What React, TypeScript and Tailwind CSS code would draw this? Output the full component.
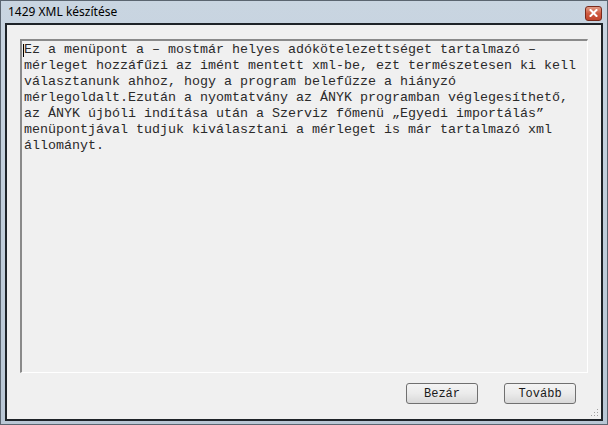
export default function App() {
  const lines = [
    "Ez a menüpont a – mostmár helyes adókötelezettséget tartalmazó –",
    "mérleget hozzáfűzi az imént mentett xml-be, ezt természetesen ki kell",
    "választanunk ahhoz, hogy a program belefűzze a hiányzó",
    "mérlegoldalt.Ezután a nyomtatvány az ÁNYK programban véglegesíthető,",
    "az ÁNYK újbóli indítása után a Szerviz főmenü „Egyedi importálás”",
    "menüpontjával tudjuk kiválasztani a mérleget is már tartalmazó xml",
    "állományt.",
  ];

  return (
    <div className="w-[608px] h-[425px] flex flex-col border border-[#5b6570] bg-gradient-to-b from-[#c9d5e1] to-[#b9c7d5] pb-[3px] px-[4px] overflow-hidden">
      {/* title bar */}
      <div className="h-[22px] flex items-center justify-between pl-[3px] pr-[1px]">
        <span className="text-[12px] text-black font-['Noto_Sans',sans-serif] leading-none">
          1429 XML készítése
        </span>
        <button className="w-[17px] h-[15px] mt-[2px] rounded-[3px] border border-[#7a2a1c] bg-gradient-to-b from-[#e19b86] via-[#cf5a40] to-[#c0432b] flex items-center justify-center">
          <svg width="9" height="8" viewBox="0 0 9 8">
            <path d="M1.5 1 L7.5 7 M7.5 1 L1.5 7" stroke="#fff" strokeWidth="2" strokeLinecap="square" />
          </svg>
        </button>
      </div>

      {/* client area */}
      <div className="flex-1 flex flex-col border-2 border-[#1e2328] bg-[#f0f0f0] px-[13px] pt-[14px] relative">
        <div className="h-[334px] border-t-2 border-l-2 border-t-[#8a8a8a] border-l-[#8a8a8a] border-b border-r border-b-white border-r-white bg-[#f0f0f0] pl-[2px] pt-[1px]">
          <div className="font-['Liberation_Mono',monospace] text-[13.33px] leading-[16px] text-[#2a2a2a] whitespace-pre relative">
            <span className="absolute left-[-1px] top-[2px] w-px h-[13px] bg-black" />
            {lines.map((l, i) => (
              <div key={i}>{l}</div>
            ))}
          </div>
        </div>

        <div className="flex justify-end gap-[26px] mt-[10px] pr-[12px]">
          <button className="w-[72px] h-[21px] rounded-[3px] border border-[#707070] bg-gradient-to-b from-[#f4f4f4] via-[#ebebeb] to-[#d8d8d8] font-['Liberation_Mono',monospace] text-[12px] text-[#1a1a1a]">
            Bezár
          </button>
          <button className="w-[72px] h-[21px] rounded-[3px] border border-[#707070] bg-gradient-to-b from-[#f4f4f4] via-[#ebebeb] to-[#d8d8d8] font-['Liberation_Mono',monospace] text-[12px] text-[#1a1a1a]">
            Tovább
          </button>
        </div>

        {/* resize grip */}
        <svg className="absolute right-[2px] bottom-[2px]" width="10" height="10" viewBox="0 0 10 10">
          <rect x="8" y="2" width="1" height="1" fill="#a0a0a0" />
          <rect x="5" y="5" width="1" height="1" fill="#a0a0a0" />
          <rect x="8" y="5" width="1" height="1" fill="#a0a0a0" />
          <rect x="2" y="8" width="1" height="1" fill="#a0a0a0" />
          <rect x="5" y="8" width="1" height="1" fill="#a0a0a0" />
          <rect x="8" y="8" width="1" height="1" fill="#a0a0a0" />
        </svg>
      </div>
    </div>
  );
}
